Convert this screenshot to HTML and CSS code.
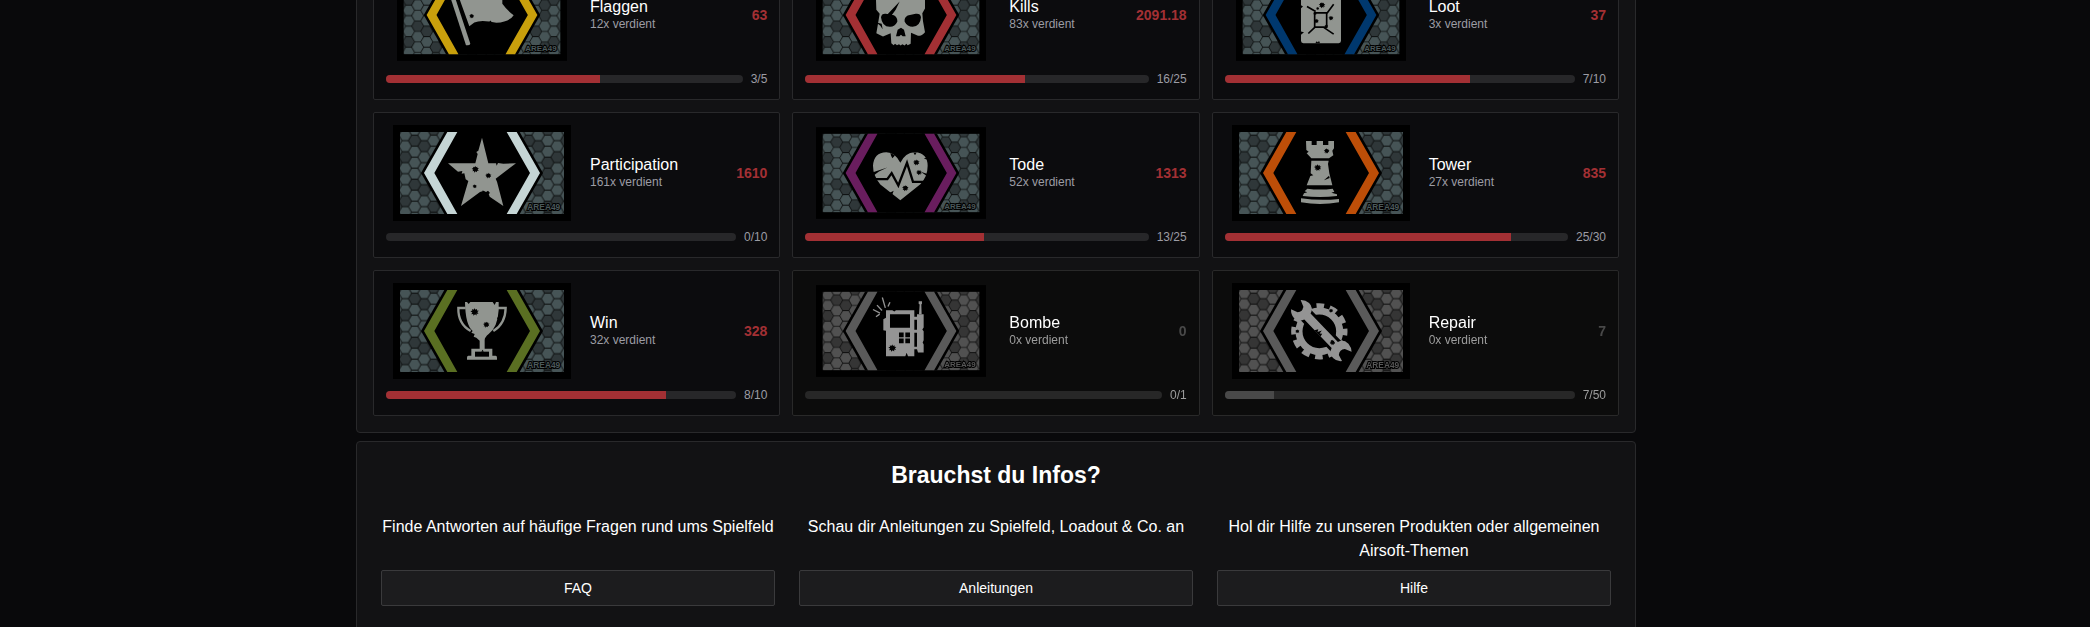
FILE: index.html
```html
<!DOCTYPE html>
<html lang="de">
<head>
<meta charset="utf-8">
<title>Medaillen</title>
<link rel="stylesheet" href="styles.css">
</head>
<body>
<svg class="defs" aria-hidden="true">
  <defs>
    <path id="hex" d="M-17.6 0L-8.8 -15.2H8.8L17.6 0L8.8 15.2H-8.8Z"/>
    <pattern id="cells" width="114" height="132" patternUnits="userSpaceOnUse" x="8" y="14">
      <rect width="114" height="132" fill="#0b0d0d"/>
      <g fill="#465456">
        <use href="#hex" x="0" y="33"/><use href="#hex" x="114" y="33"/><use href="#hex" x="0" y="66"/><use href="#hex" x="114" y="66"/>
        <use href="#hex" x="28.5" y="16.5"/><use href="#hex" x="28.5" y="49.5"/><use href="#hex" x="28.5" y="115.5"/>
        <use href="#hex" x="57" y="0"/><use href="#hex" x="57" y="132"/><use href="#hex" x="57" y="66"/><use href="#hex" x="57" y="99"/>
        <use href="#hex" x="85.5" y="16.5"/><use href="#hex" x="85.5" y="82.5"/><use href="#hex" x="85.5" y="115.5"/>
      </g>
      <g fill="#2f3739">
        <use href="#hex" x="0" y="0"/><use href="#hex" x="114" y="0"/><use href="#hex" x="0" y="132"/><use href="#hex" x="114" y="132"/>
        <use href="#hex" x="0" y="99"/><use href="#hex" x="114" y="99"/><use href="#hex" x="28.5" y="82.5"/><use href="#hex" x="57" y="33"/><use href="#hex" x="85.5" y="49.5"/>
      </g>
    </pattern>
    <path id="hole" d="M0-10L2-6L6-8L6-4L11-3L7 0L10 5L5 4L5 9L1 6L-3 10L-4 5L-9 6L-6 1L-11-2L-6-4L-7-8L-3-6Z"/>
    <g id="frame">
      <rect width="534" height="288" fill="#000"/>
      <rect x="21" y="21" width="492" height="246" fill="url(#cells)"/>
      <path fill="#000" d="M154 21L84 144L154 267H380L450 144L380 21Z"/>
      <path fill="currentColor" d="M163 21H193L124 144L193 267H163L93 144ZM371 21H341L411 144L341 267H371L441 144Z"/>
      <text x="403" y="256" class="brand">AREA49</text>
    </g>
  </defs>
</svg>

<main class="page">
  <section class="panel medals" aria-label="Medaillen">
    <article class="card">
      <div class="summary">
        <div class="art"><svg class="badge small gold" viewBox="0 0 534 288" role="img" aria-label="Flaggen">
          <use href="#frame"/>
          <g class="icon" transform="scale(1.047) translate(-142 94)">
            <path d="M285-62L298-64L362 130Q360 136 349 134Z"/>
            <path d="M310-62Q350-80 390-62T458-62V10Q474 32 492 44Q480 64 440 67Q395 56 374 66L359 77L333 5Z"/>
            <g class="cut"><use href="#hole" transform="translate(366 47) scale(.7)"/><path d="M418 66L422 60L427 66Z"/></g>
          </g>
        </svg></div>
        <div class="info"><h3>Flaggen</h3><p>12x verdient</p></div>
        <strong class="points">63</strong>
      </div>
      <div class="progress"><div class="track"><div class="fill" style="width:60%"></div></div><span>3/5</span></div>
    </article>

    <article class="card">
      <div class="summary">
        <div class="art"><svg class="badge small red" viewBox="0 0 534 288" role="img" aria-label="Kills">
          <use href="#frame"/>
          <g class="icon" transform="scale(1.047) translate(-111 94)">
            <path d="M291-2Q300-68 365-68T438-2V24L430 38L432 62L438 95Q430 106 417 106L396 97L395 130L386 134L382 130L377 135L370 131L365 135L360 131L354 134L348 130L344 134L337 128L335 98L312 108L292 98L297 70L302 40L292 28Z"/>
            <g class="cut"><path d="M306 50Q308 39 320 40L345 44Q356 50 355 64Q347 80 332 79Q309 78 306 50ZM426 50Q424 38 410 40L386 45Q375 51 377 64Q385 79 401 79Q424 77 426 50ZM366 82L375 88L380 107H371L366 103L361 107H351L356 88ZM325 42L362 3L350 28L337 46ZM292 66L308 70L311 86L304 76Z"/></g>
          </g>
        </svg></div>
        <div class="info"><h3>Kills</h3><p>83x verdient</p></div>
        <strong class="points">2091.18</strong>
      </div>
      <div class="progress"><div class="track"><div class="fill" style="width:64%"></div></div><span>16/25</span></div>
    </article>

    <article class="card">
      <div class="summary">
        <div class="art"><svg class="badge small blue" viewBox="0 0 534 288" role="img" aria-label="Loot">
          <use href="#frame"/>
          <g class="icon" transform="scale(1.047) translate(-108 94)">
            <rect x="303" y="-62" width="120" height="190" rx="7"/>
            <path class="line-cut" d="M344 37H380V80H344ZM321 18L347 33M401 11L381 38M345 80L325 99M370 80L401 101"/>
            <g class="cut"><use href="#hole" transform="translate(366 14) scale(.9)"/><use href="#hole" transform="translate(393 53) scale(.7)"/><use href="#hole" transform="translate(349 62) scale(.7)"/><use href="#hole" transform="translate(345 39) scale(.5)"/><use href="#hole" transform="translate(353 24) scale(.45)"/><use href="#hole" transform="translate(379 77) scale(.5)"/><path d="M303 14L309 18L303 23ZM303 93L312 95L303 103ZM346 128L350 122L354 126L357 121L360 128Z"/></g>
          </g>
        </svg></div>
        <div class="info"><h3>Loot</h3><p>3x verdient</p></div>
        <strong class="points">37</strong>
      </div>
      <div class="progress"><div class="track"><div class="fill" style="width:70%"></div></div><span>7/10</span></div>
    </article>

    <article class="card">
      <div class="summary">
        <div class="art"><svg class="badge pale" viewBox="0 0 534 288" role="img" aria-label="Participation">
          <use href="#frame"/>
          <g class="icon" transform="translate(-129 -375)">
            <path d="M396 413L415 490H438L440 497L444 489L460 491L498 490L437 536L441 545L460 618L419 590L415 578L400 573L390 576L333 618L355 543L347 538L343 520L335 521L337 513L324 515L294 490H376L383 462L379 456L385 452Z"/>
            <g class="cut"><use href="#hole" x="376" y="508"/><use href="#hole" transform="translate(415 527) scale(.85)"/><use href="#hole" transform="translate(374 559) scale(.6)"/><path d="M398 571L407 577L414 572L420 579L416 582H398Z"/></g>
          </g>
        </svg></div>
        <div class="info"><h3>Participation</h3><p>161x verdient</p></div>
        <strong class="points">1610</strong>
      </div>
      <div class="progress"><div class="track"><div class="fill" style="width:0%"></div></div><span>0/10</span></div>
    </article>

    <article class="card">
      <div class="summary">
        <div class="art"><svg class="badge small purple" viewBox="0 0 534 288" role="img" aria-label="Tode">
          <use href="#frame"/>
          <g class="icon" transform="scale(1.047) translate(-111 -381)">
            <path d="M364 600L304 553Q282 527 282 497Q284 457 322 456Q350 457 364 488Q378 457 407 456Q446 458 446 497Q446 530 424 552Z"/>
            <path class="line-cut heavy" d="M284 537H325L338 519L358 556L384 488L402 545H446"/>
            <g class="cut"><use href="#hole" transform="translate(412 487) scale(.9)"/><use href="#hole" transform="translate(420 517) scale(.8)"/><use href="#hole" transform="translate(379 564) scale(.9)"/><path d="M282 516L325 502L300 514L284 526ZM334 458L348 466L340 474L336 466ZM425 515L448 522L446 530L436 522ZM403 457L408 465L413 457ZM332 578L344 572L340 583ZM434 476L446 471V478Z"/></g>
          </g>
        </svg></div>
        <div class="info"><h3>Tode</h3><p>52x verdient</p></div>
        <strong class="points">1313</strong>
      </div>
      <div class="progress"><div class="track"><div class="fill" style="width:52%"></div></div><span>13/25</span></div>
    </article>

    <article class="card">
      <div class="summary">
        <div class="art"><svg class="badge orange" viewBox="0 0 534 288" role="img" aria-label="Tower">
          <use href="#frame"/>
          <g class="icon" transform="translate(-96 -375)">
            <path d="M318 423H335V435H350V423H369V435H385V423H402V445L397 452L400 466L387 475H334L320 460L326 455L319 450Z"/>
            <path d="M334 482H386L384 492L388 520L397 556H320L331 528L340 526L332 520Z"/>
            <path d="M322 566Q360 571 398 566L403 575L394 578L411 583V588Q360 594 308 588L312 580L322 577L314 574Z"/>
            <path d="M303 595Q360 603 417 597V607Q360 617 303 607Z"/>
            <g class="cut"><use href="#hole" transform="translate(380 453) scale(.8)"/><use href="#hole" x="353" y="503"/><path d="M387 527L372 541L389 534Z"/></g>
          </g>
        </svg></div>
        <div class="info"><h3>Tower</h3><p>27x verdient</p></div>
        <strong class="points">835</strong>
      </div>
      <div class="progress"><div class="track"><div class="fill" style="width:83.33%"></div></div><span>25/30</span></div>
    </article>

    <article class="card">
      <div class="summary">
        <div class="art"><svg class="badge olive" viewBox="0 0 534 288" role="img" aria-label="Win">
          <use href="#frame"/>
          <g class="icon" transform="translate(-129 -99)">
            <path d="M345 156H446V180Q443 232 416 252Q404 262 404 270V296H427V317H437Q441 317 441 323V329H351V323Q351 317 355 317H364V296H389V272L379 263L371 260L374 252L364 248L368 243Q346 225 345 156Z"/>
            <path class="line" d="M347 174H325Q324 222 362 243M444 174H467Q466 222 430 243"/>
            <g class="cut"><rect x="375" y="305" width="42" height="15"/><use href="#hole" transform="translate(374 186) scale(1.15)"/><use href="#hole" transform="translate(409 224) scale(.9)"/><path d="M428 156L434 165L438 156ZM351 156L356 162L361 156ZM446 198L441 205L446 212ZM394 305L398 299L401 305Z"/></g>
          </g>
        </svg></div>
        <div class="info"><h3>Win</h3><p>32x verdient</p></div>
        <strong class="points">328</strong>
      </div>
      <div class="progress"><div class="track"><div class="fill" style="width:80%"></div></div><span>8/10</span></div>
    </article>

    <article class="card locked">
      <div class="summary">
        <div class="art"><svg class="badge small slate" viewBox="0 0 534 288" role="img" aria-label="Bombe">
          <use href="#frame"/>
          <g class="icon" transform="scale(1.047) translate(-111 -105)">
            <path d="M321 180H340L346 184L351 180H406V200H414V192H434V232L430 238L434 243V270L431 277L434 283V307H417L414 297H406V318H387L383 308L379 318H321V242L313 240V207L321 203Z"/>
            <path d="M420 192L422 163L419 161V153H429V161L427 163L428 192Z"/>
            <path class="line thin" d="M282 178L303 189M291 200L302 192M294 165L309 181M310 142L319 173M333 156L327 169"/>
            <g class="cut"><path d="M333 192H393V233H333ZM360 247H374V261H360ZM379 247H393V261H379ZM360 265H374V279H360ZM379 265H393V279H379ZM406 209H414V239H406ZM406 248H414V290H406Z"/><use href="#hole" transform="translate(340 294) scale(1.1)"/></g>
          </g>
        </svg></div>
        <div class="info"><h3>Bombe</h3><p>0x verdient</p></div>
        <strong class="points">0</strong>
      </div>
      <div class="progress"><div class="track"><div class="fill" style="width:0%"></div></div><span>0/1</span></div>
    </article>

    <article class="card locked">
      <div class="summary">
        <div class="art"><svg class="badge slate" viewBox="0 0 534 288" role="img" aria-label="Repair">
          <use href="#frame"/>
          <g class="icon" transform="translate(-96 -99)">
            <g class="gear"><circle cx="358" cy="244" r="61" stroke-width="21"/><circle cx="358" cy="244" r="76" stroke-width="17" stroke-dasharray="23 16.8" stroke-dashoffset="11"/></g>
            <g class="cut"><use href="#hole" transform="translate(393 182) scale(.6)"/><use href="#hole" transform="translate(292 244) scale(.6)"/></g>
            <g transform="translate(364 243) rotate(46)">
              <path class="shadow" d="M-72-13H72V13H-72Z"/>
              <path d="M-60-13H58Q64-32 84-32Q98-31 108-22L88-13Q78 0 88 12L108 18Q98 31 84 31Q64 32 58 13H-60Q-66 32-86 32Q-100 31-110 20L-90 12Q-80 0-90-12L-110-20Q-100-31-86-32Q-66-32-60-13Z"/>
              <g class="cut"><use href="#hole" transform="translate(48 0) scale(.8)"/><path d="M-16 13L-10 3L-6 10L0-2L2 9L8 4L10 13Z"/></g>
            </g>
          </g>
        </svg></div>
        <div class="info"><h3>Repair</h3><p>0x verdient</p></div>
        <strong class="points">7</strong>
      </div>
      <div class="progress"><div class="track"><div class="fill" style="width:14%"></div></div><span>7/50</span></div>
    </article>
  </section>

  <section class="panel help">
    <h2>Brauchst du Infos?</h2>
    <div class="topics">
      <div class="topic"><p>Finde Antworten auf häufige Fragen rund ums Spielfeld</p><button type="button">FAQ</button></div>
      <div class="topic"><p>Schau dir Anleitungen zu Spielfeld, Loadout &amp; Co. an</p><button type="button">Anleitungen</button></div>
      <div class="topic"><p>Hol dir Hilfe zu unseren Produkten oder allgemeinen Airsoft-Themen</p><button type="button">Hilfe</button></div>
    </div>
  </section>
</main>
</body>
</html>
```
FILE: styles.css
```css
* { box-sizing: border-box; }

body {
  margin: 0;
  background: #09090b;
  color: #fff;
  font-family: "Liberation Sans", Arial, sans-serif;
  font-size: 16px;
  line-height: 24px;
}

h2, h3, p { margin: 0; font-weight: 400; }

.defs { position: absolute; width: 0; height: 0; }

/* The view opens part-way down the medal list. */
.page {
  display: flex;
  flex-direction: column;
  align-items: center;
  gap: 8px;
  height: 100vh;
  overflow: hidden;
  padding-right: 98px;
}

.panel {
  flex: none;
  width: 100%;
  max-width: 1280px;
  padding: 16px;
  background: #121214;
  border: 1px solid #29292b;
  border-radius: 4px;
}

.medals {
  display: grid;
  grid-template-columns: repeat(3, minmax(0, 1fr));
  gap: 12px;
  margin-top: -63px;
}

.card {
  display: flex;
  flex-direction: column;
  gap: 8px;
  padding: 12px;
  background: #0c0c0e;
  border: 1px solid #29292b;
  border-radius: 2px;
}

.locked { filter: grayscale(1); }

.summary {
  display: flex;
  align-items: center;
  gap: 12px;
  height: 96px;
}

.art {
  display: flex;
  flex: none;
  justify-content: center;
  width: 192px;
}

.badge { display: block; width: 178px; height: 96px; }
.badge.small { width: 170px; height: 92px; }

.gold { color: #c9a00c; }
.red { color: #a33034; }
.blue { color: #00386e; }
.pale { color: #c5d5d5; }
.purple { color: #691d5e; }
.orange { color: #bd4e08; }
.olive { color: #5a6f22; }
.slate { color: #5a5a5a; }

.brand {
  font-size: 25px;
  font-weight: 700;
  fill: #4c595b;
  stroke: #000;
  stroke-width: 6px;
  paint-order: stroke;
}

.icon { fill: #919590; }
.cut { fill: #000; }
.line-cut { fill: none; stroke: #000; stroke-width: 5px; }
.heavy { stroke-width: 7px; }
.line { fill: none; stroke: #919590; stroke-width: 7px; }
.thin { stroke-width: 4px; }
.gear { fill: none; stroke: #919590; }
.shadow { stroke: #000; stroke-width: 18px; }

.info { flex: 1; min-width: 0; }
.info h3 { font-size: 16px; line-height: 18px; }
.info p { color: #9c9ca4; font-size: 12px; line-height: 16px; }

.points { color: #a33034; font-size: 14px; line-height: 20px; }

.progress {
  display: flex;
  align-items: center;
  gap: 8px;
  color: #9c9ca4;
  font-size: 12px;
  line-height: 16px;
}

.track {
  flex: 1;
  height: 8px;
  overflow: hidden;
  background: #272729;
  border-radius: 4px;
}

.fill { height: 100%; background: #a33034; }

.help { padding: 17px 24px 32px; }

.help h2 {
  margin-bottom: 24px;
  font-size: 23px;
  font-weight: 700;
  line-height: 32px;
  text-align: center;
}

.topics {
  display: grid;
  grid-template-columns: repeat(3, minmax(0, 1fr));
  gap: 24px;
}

.topic {
  display: flex;
  flex-direction: column;
  justify-content: space-between;
  gap: 7px;
  text-align: center;
}

.topic button {
  height: 36px;
  padding: 0 16px;
  background: #1c1c1e;
  border: 1px solid #3a3a3c;
  border-radius: 2px;
  color: #fff;
  font-family: inherit;
  font-size: 14px;
  line-height: 20px;
}
```
